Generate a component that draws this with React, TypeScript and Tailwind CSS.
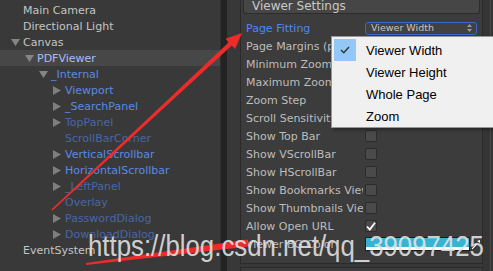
import React from 'react'

type Node = {
  label: string
  level: number
  arrow?: 'down' | 'right'
  tone: 'gray' | 'sel' | 'blue' | 'dim'
  selected?: boolean
}

const tree: Node[] = [
  { label: 'Main Camera', level: 0, tone: 'gray' },
  { label: 'Directional Light', level: 0, tone: 'gray' },
  { label: 'Canvas', level: 0, arrow: 'down', tone: 'gray' },
  { label: 'PDFViewer', level: 1, arrow: 'down', tone: 'sel', selected: true },
  { label: '_Internal', level: 2, arrow: 'down', tone: 'blue' },
  { label: 'Viewport', level: 3, arrow: 'right', tone: 'blue' },
  { label: '_SearchPanel', level: 3, arrow: 'right', tone: 'blue' },
  { label: 'TopPanel', level: 3, arrow: 'right', tone: 'dim' },
  { label: 'ScrollBarCorner', level: 3, tone: 'dim' },
  { label: 'VerticalScrollbar', level: 3, arrow: 'right', tone: 'blue' },
  { label: 'HorizontalScrollbar', level: 3, arrow: 'right', tone: 'blue' },
  { label: '_LeftPanel', level: 3, arrow: 'right', tone: 'dim' },
  { label: 'Overlay', level: 3, tone: 'dim' },
  { label: 'PasswordDialog', level: 3, arrow: 'right', tone: 'dim' },
  { label: 'DownloadDialog', level: 3, arrow: 'right', tone: 'dim' },
  { label: 'EventSystem', level: 0, tone: 'gray' },
]

const indent = ['pl-[11px]', 'pl-[25px]', 'pl-[39px]', 'pl-[53px]']

const toneClass = {
  gray: 'text-[#c4c4c4]',
  sel: 'text-[#a9bdf6]',
  blue: 'text-[#5b8ae2]',
  dim: 'text-[#4767a6]',
}

type Prop = {
  label: string
  kind: 'dropdown' | 'blank' | 'check' | 'checked' | 'color'
  active?: boolean
}

const props: Prop[] = [
  { label: 'Page Fitting', kind: 'dropdown', active: true },
  { label: 'Page Margins (px)', kind: 'blank' },
  { label: 'Minimum Zoom', kind: 'blank' },
  { label: 'Maximum Zoom', kind: 'blank' },
  { label: 'Zoom Step', kind: 'blank' },
  { label: 'Scroll Sensitivity', kind: 'blank' },
  { label: 'Show Top Bar', kind: 'check' },
  { label: 'Show VScrollBar', kind: 'check' },
  { label: 'Show HScrollBar', kind: 'check' },
  { label: 'Show Bookmarks Viewer', kind: 'check' },
  { label: 'Show Thumbnails Viewer', kind: 'check' },
  { label: 'Allow Open URL', kind: 'checked' },
  { label: 'Viewer BG Color', kind: 'color' },
]

const menuItems = ['Viewer Width', 'Viewer Height', 'Whole Page', 'Zoom']

function Arrow({ dir }: { dir?: 'down' | 'right' }) {
  return (
    <div className="w-[12px] h-[16px] shrink-0 flex items-center">
      {dir === 'down' && (
        <svg width="9" height="7" viewBox="0 0 9 7">
          <polygon points="0,0 9,0 4.5,7" fill="#858585" />
        </svg>
      )}
      {dir === 'right' && (
        <svg width="8" height="9" viewBox="0 0 8 9">
          <polygon points="0,0 8,4.5 0,9" fill="#7e7e7e" />
        </svg>
      )}
    </div>
  )
}

function Field({ kind }: { kind: Prop['kind'] }) {
  if (kind === 'dropdown') {
    return (
      <div className="w-[112px] h-[13px] border border-[#3f63d2] rounded-[3px] bg-[#414141] flex items-center justify-between pl-[5px] pr-[4px] text-[9.5px] text-[#c6c6c6] leading-none">
        <span>Viewer Width</span>
        <svg width="5" height="8" viewBox="0 0 5 8">
          <polygon points="0,3 5,3 2.5,0" fill="#9a9a9a" />
          <polygon points="0,5 5,5 2.5,8" fill="#9a9a9a" />
        </svg>
      </div>
    )
  }
  if (kind === 'check' || kind === 'checked') {
    return (
      <div className="w-[12px] h-[12px] rounded-[2px] bg-[#4a4a4a] border border-[#2c2c2c] flex items-center justify-center">
        {kind === 'checked' && (
          <svg width="10" height="9" viewBox="0 0 10 9">
            <path d="M1 4.5 L3.8 7.5 L9 0.8" stroke="#ffffff" strokeWidth="1.8" fill="none" />
          </svg>
        )}
      </div>
    )
  }
  if (kind === 'color') {
    return (
      <div className="flex items-center">
        <div className="w-[105px] h-[14px] border border-[#1d1d1d] flex flex-col">
          <div className="flex-1 bg-[#35b4d3]" />
          <div className="h-[3px] bg-white" />
        </div>
        <svg width="10" height="11" viewBox="0 0 10 11" className="ml-[1px]">
          <path d="M1 10 L6 5" stroke="#000" strokeWidth="2.4" />
          <path d="M1 10 L6 5" stroke="#fff" strokeWidth="1.2" />
          <path d="M6 2 L9 1 L9 4 Z" fill="#fff" />
        </svg>
      </div>
    )
  }
  return null
}

export default function App() {
  return (
    <div className="relative w-[493px] h-[271px] overflow-hidden flex bg-[#383838] font-['DejaVu_Sans',sans-serif] text-[11px]">
      {/* Hierarchy */}
      <div className="w-[220px] shrink-0 h-full bg-[#393939] pt-[2px] flex flex-col">
        {tree.map((n) => (
          <div
            key={n.label}
            className={`h-[16px] flex items-center whitespace-nowrap ${indent[n.level]} ${n.selected ? 'bg-[#474747]' : ''}`}
          >
            <Arrow dir={n.arrow} />
            <span className={`leading-none ${toneClass[n.tone]}`}>{n.label}</span>
          </div>
        ))}
      </div>

      {/* Splitter */}
      <div className="w-[7px] shrink-0 h-full bg-[#232323] border-l border-[#2e2e2e]" />

      {/* Inspector */}
      <div className="flex-1 h-full flex">
        <div className="w-[256px] pl-[13px] flex flex-col">
          <div className="w-[243px] h-[264px] shrink-0 bg-[#3c3c3c] border-x border-b border-[#2a2a2a] flex flex-col">
            <div className="mx-[2px] h-[14px] shrink-0 bg-[#464646] border-x border-b border-[#2c2c2c] rounded-b-[3px] pl-[8px] text-[12px] leading-[12px] text-[#c9c9c9]">
              Viewer Settings
            </div>
            <div className="pt-[5px] flex flex-col">
              {props.map((p) => (
                <div key={p.label} className="h-[18px] flex items-center">
                  <div
                    className={`w-[122px] shrink-0 pl-[5px] overflow-hidden whitespace-nowrap leading-none ${p.active ? 'text-[#4f88f2]' : 'text-[#bdbdbd]'}`}
                  >
                    {p.label}
                  </div>
                  <div className="ml-[2px]">
                    <Field kind={p.kind} />
                  </div>
                </div>
              ))}
            </div>
          </div>
          <div className="w-[243px] mt-[3px] flex-1 bg-[#3c3c3c] border-x border-t border-[#2a2a2a]" />
        </div>
        <div className="w-[10px] h-full bg-[#353535] flex justify-end pr-[2px]">
          <div className="w-px h-full bg-[#474747]" />
        </div>
      </div>

      {/* Popup menu */}
      <div className="absolute left-[331px] top-[36px] w-[170px] h-[92px] bg-[#f0f0f0] border border-[#979797] p-[2px] shadow-[2px_2px_3px_rgba(0,0,0,0.35)] font-['Liberation_Sans',Arial,sans-serif] text-[13px] text-black">
        {menuItems.map((m, i) => (
          <div key={m} className="h-[22px] flex items-center">
            <div className={`w-[22px] h-[22px] flex items-center justify-center ${i === 0 ? 'bg-[#93c8f6]' : ''}`}>
              {i === 0 && (
                <svg width="10" height="8" viewBox="0 0 10 8">
                  <path d="M1 4 L3.8 6.8 L9 1" stroke="#333" strokeWidth="1.4" fill="none" />
                </svg>
              )}
            </div>
            <span className="ml-[10px] leading-none">{m}</span>
          </div>
        ))}
      </div>

      {/* Red annotation arrows */}
      <svg className="absolute inset-0 pointer-events-none" width="493" height="271" viewBox="0 0 493 271">
        <polygon
          points="51.4,209.4 228.8,42.3 225.5,38.8 242,33 235.1,49 231.8,45.5 52.6,210.6"
          fill="#ee2b2b"
        />
        <polygon points="85.9,263 247.5,239.5 248.5,246.5 86.1,265" fill="#ee2b2b" />
      </svg>

      {/* Watermark */}
      <div className="absolute left-[88px] top-[231px] origin-left scale-x-86 whitespace-nowrap font-['Liberation_Sans',Arial,sans-serif] text-[30px] leading-[30px] text-[#e4e4e4]/90 pointer-events-none">
        https://blog.csdn.net/qq_39097425
      </div>
    </div>
  )
}
